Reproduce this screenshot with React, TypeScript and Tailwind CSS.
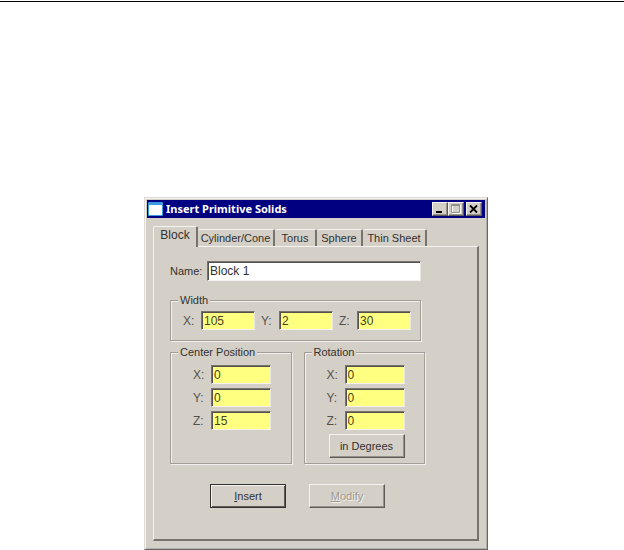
import React, { useState } from "react";
import clsx from "clsx";

const tabs = [
  { name: "Block", width: "w-[45px]" },
  { name: "Cylinder/Cone", width: "w-[77px]" },
  { name: "Torus", width: "w-[42px]" },
  { name: "Sphere", width: "w-[46px]" },
  { name: "Thin Sheet", width: "w-[64px]" },
];

const sunken =
  "border border-t-[#77736d] border-l-[#77736d] border-r-[#e9e7e2] border-b-[#f4f3f0] shadow-[inset_1px_1px_0_#55524d]";
const raised =
  "border border-t-[#f4f3f0] border-l-[#f4f3f0] border-r-[#5f5c58] border-b-[#5f5c58] shadow-[inset_-1px_-1px_0_#96928b]";

type FieldProps = {
  id: string;
  label: string;
  value: string;
  inputClass: string;
};

const AxisField = ({ id, label, value, inputClass }: FieldProps) => (
  <div className="flex items-center">
    <label htmlFor={id} className="w-[18px] shrink-0 text-xs leading-4 text-[#55524e]">
      {label}:
    </label>
    <input
      id={id}
      defaultValue={value}
      className={clsx("h-[19px] min-w-0 bg-[#ffff80] px-0.5 text-xs text-[#45431f] outline-none", sunken, inputClass)}
    />
  </div>
);

type GroupProps = {
  title: string;
  className?: string;
  children: React.ReactNode;
};

const Group = ({ title, className, children }: GroupProps) => (
  <fieldset
    className={clsx(
      "min-w-0 border border-[#a29e97] shadow-[1px_1px_0_#f2f0ec,inset_1px_1px_0_#f2f0ec]",
      className
    )}
  >
    <legend className="ml-[7px] bg-[#d4d0c8] px-0.5 leading-[14px]">{title}</legend>
    {children}
  </fieldset>
);

const captionButton =
  "flex h-[14px] w-4 items-center justify-center bg-[#d4d0c8]";

const TitleBar = () => (
  <header className="flex h-[18px] items-center bg-[#000080] pr-[3px] pl-px text-white">
    <svg width="15" height="14" viewBox="0 0 15 14" aria-hidden="true">
      <rect width="15" height="14" rx="1" fill="#3a9be0" />
      <rect x="1" y="3" width="13" height="10" fill="#fff" />
    </svg>
    <h1 className="ml-[3px] flex-1 font-['Noto_Sans',sans-serif] text-[11px] leading-4 font-bold whitespace-nowrap">
      Insert Primitive Solids
    </h1>
    <button type="button" aria-label="Minimize" className={clsx(captionButton, raised)}>
      <svg width="12" height="10" viewBox="0 0 12 10">
        <path d="M2 7h6v2H2z" fill="#000" />
      </svg>
    </button>
    <button type="button" aria-label="Maximize" disabled className={clsx(captionButton, raised)}>
      <svg width="12" height="10" viewBox="0 0 12 10">
        <path d="M2.500 1.500h8v8h-8z" fill="none" stroke="#fff" />
        <path d="M1.500 .5h8v8h-8zM1 1.500h9" fill="none" stroke="#96928b" />
      </svg>
    </button>
    <button type="button" aria-label="Close" className={clsx("ml-0.5", captionButton, raised)}>
      <svg width="12" height="10" viewBox="0 0 12 10">
        <path d="M2 1.500l7 7M9 1.500l-7 7" stroke="#000" strokeWidth="1.800" />
      </svg>
    </button>
  </header>
);

const App = () => {
  const [activeTab, setActiveTab] = useState("Block");

  return (
    <main className="bg-white pt-px font-['Liberation_Sans',Arial,sans-serif] text-[11px] text-[#33312e]">
      <hr className="border-t border-black" />

      <div className="pt-[195px] pr-[136px] pl-36">
        <section className="border border-t-[#dedbd5] border-r-[#66666e] border-b-[#66666e] border-l-[#dedbd5] bg-[#d4d0c8] pb-2 shadow-[inset_1px_1px_0_#f4f3f0,inset_-1px_-1px_0_#b4b0aa]">
          <div className="px-0.5 pt-0.5">
            <TitleBar />
          </div>

          <div className="px-2 pt-2">
            <div role="tablist" className="flex items-end">
              {tabs.map(({ name, width }) => (
                <button
                  key={name}
                  type="button"
                  role="tab"
                  aria-selected={name === activeTab}
                  onClick={() => setActiveTab(name)}
                  className={clsx(
                    "flex justify-center rounded-t-xs border-t border-r-2 border-t-[#f4f3f0] border-r-[#77736d] whitespace-nowrap",
                    width,
                    name === activeTab
                      ? "relative -mb-px h-[21px] border-l border-l-[#f4f3f0] bg-[#d4d0c8] text-xs"
                      : "h-[17px]"
                  )}
                >
                  {name}
                </button>
              ))}
            </div>

            <form
              onSubmit={(e) => e.preventDefault()}
              className="border-t border-r-2 border-b-2 border-l border-t-[#f4f3f0] border-r-[#77736d] border-b-[#77736d] border-l-[#f4f3f0] pt-[14px] pr-14 pb-[31px] pl-4"
            >
              <div className="flex items-center">
                <label htmlFor="name" className="w-[37px] shrink-0">
                  Name:
                </label>
                <input
                  id="name"
                  defaultValue="Block 1"
                  className={clsx("h-5 min-w-0 flex-1 bg-white px-0.5 text-xs outline-none", sunken)}
                />
              </div>

              <Group title="Width" className="mt-3">
                <div className="flex justify-between pt-1 pr-[9px] pb-[10px] pl-3">
                  <AxisField id="width-x" label="X" value="105" inputClass="w-[54px]" />
                  <AxisField id="width-y" label="Y" value="2" inputClass="w-[54px]" />
                  <AxisField id="width-z" label="Z" value="30" inputClass="w-[54px]" />
                </div>
              </Group>

              <div className="mt-1 -mr-1 grid grid-cols-2 gap-x-3">
                <Group title="Center Position">
                  <div className="flex flex-col gap-1 pt-1.5 pl-[22px]">
                    <AxisField id="center-x" label="X" value="0" inputClass="w-[60px]" />
                    <AxisField id="center-y" label="Y" value="0" inputClass="w-[60px]" />
                    <AxisField id="center-z" label="Z" value="15" inputClass="w-[60px]" />
                  </div>
                </Group>

                <Group title="Rotation">
                  <div className="flex flex-col gap-1 pt-1.5 pb-[5px] pl-[22px]">
                    <AxisField id="rotation-x" label="X" value="0" inputClass="w-[60px]" />
                    <AxisField id="rotation-y" label="Y" value="0" inputClass="w-[60px]" />
                    <AxisField id="rotation-z" label="Z" value="0" inputClass="w-[60px]" />
                    <button type="button" className={clsx("ml-0.5 h-6 w-[76px]", raised)}>
                      in Degrees
                    </button>
                  </div>
                </Group>
              </div>

              <div className="mt-5 flex gap-[23px] pl-10">
                <button
                  type="submit"
                  className="h-6 w-[76px] border border-[#33312e] shadow-[inset_1px_1px_0_#f4f3f0,inset_-1px_-1px_0_#5f5c58]"
                >
                  <span className="underline">I</span>nsert
                </button>
                <button
                  type="button"
                  disabled
                  className={clsx("h-6 w-[76px] text-[#9c9891] text-shadow-[1px_1px_0_#f4f3f0]", raised)}
                >
                  <span className="underline">M</span>odify
                </button>
              </div>
            </form>
          </div>
        </section>
      </div>
    </main>
  );
};

export default App;
